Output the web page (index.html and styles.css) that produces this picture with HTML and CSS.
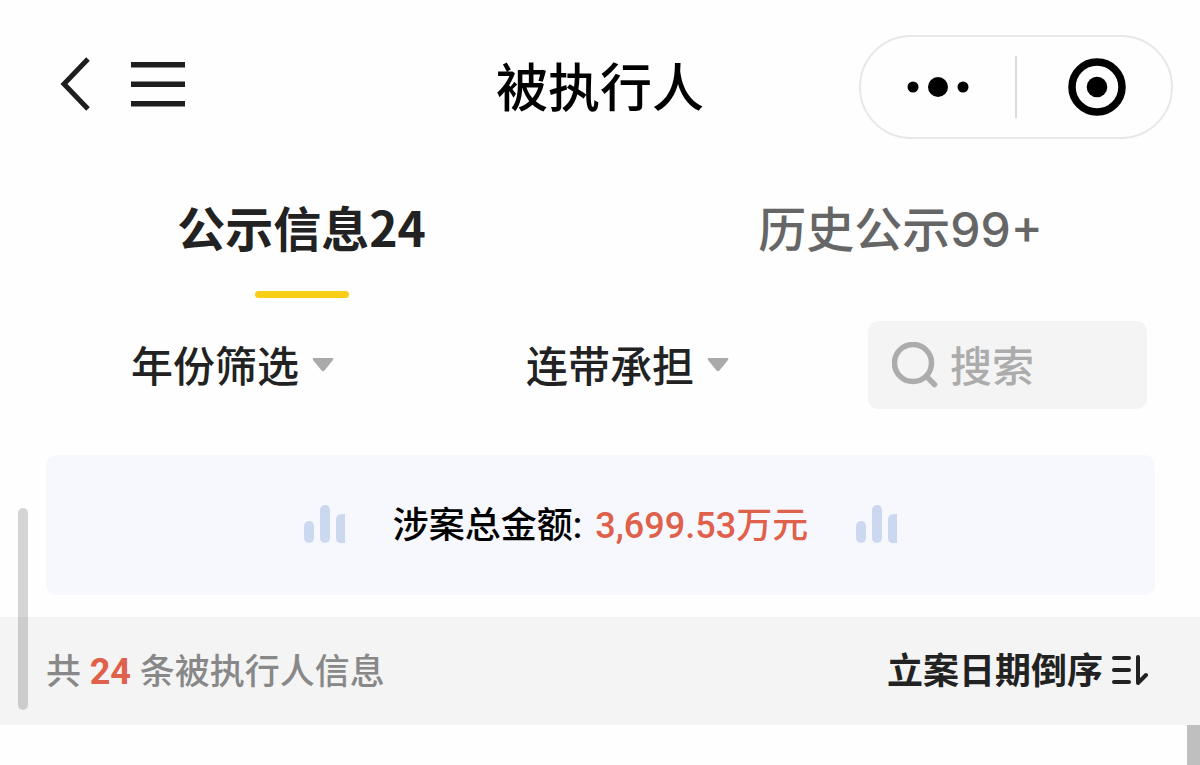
FILE: index.html
```
<!DOCTYPE html>
<html lang="zh-CN">
<head>
  <meta charset="UTF-8" />
  <meta name="viewport" content="width=device-width, initial-scale=1.0"/>
  <title>被执行人</title>
  <link rel="stylesheet" href="styles.css">
</head>
<body>
  <header class="header">
    <div class="nav">
      <button class="icon-btn" aria-label="返回">
        <svg width="32" height="56" viewBox="0 0 32 56" fill="none" stroke="#1e1e1e" stroke-width="5"><path d="M29 3 5 28 29 53"/></svg>
      </button>
      <button class="icon-btn" aria-label="菜单">
        <svg width="54" height="56" viewBox="0 0 54 56" fill="#1e1e1e"><path d="M0 6h54v5.500H0zM0 25.500h54V31H0zM0 45h54v5.500H0z"/></svg>
      </button>
    </div>
    <h1 class="title">被执行人</h1>
    <div class="capsule">
      <button class="icon-btn capsule-btn" aria-label="更多">
        <svg width="62" height="22" viewBox="0 0 62 22"><circle cx="6" cy="11" r="5.500"/><circle cx="31" cy="11" r="10"/><circle cx="56" cy="11" r="5.500"/></svg>
      </button>
      <span class="capsule-line"></span>
      <button class="icon-btn capsule-btn close" aria-label="关闭">
        <svg width="58" height="58" viewBox="0 0 58 58"><circle cx="29" cy="29" r="25" fill="none" stroke="#000" stroke-width="7.500"/><circle cx="29" cy="29" r="10.300"/></svg>
      </button>
    </div>
  </header>

  <nav class="tabs">
    <a href="#current" class="tab active">公示信息24</a>
    <a href="#history" class="tab">历史公示99+</a>
  </nav>

  <form class="filters">
    <div class="filter">
      <select aria-label="年份筛选"><option>年份筛选</option></select>
      <svg class="caret" width="22" height="14" viewBox="0 0 22 14"><path d="M2 0h18q2 0 1 2L12.500 12.500q-1.500 1.500-3 0L1 2Q0 0 2 0z"/></svg>
    </div>
    <div class="filter">
      <select aria-label="连带承担"><option>连带承担</option></select>
      <svg class="caret" width="22" height="14" viewBox="0 0 22 14"><path d="M2 0h18q2 0 1 2L12.500 12.500q-1.500 1.500-3 0L1 2Q0 0 2 0z"/></svg>
    </div>
    <label class="search">
      <svg width="46" height="46" viewBox="0 0 46 46" fill="none" stroke="#acacac" stroke-width="5.500" stroke-linecap="round"><circle cx="21" cy="21" r="18.500"/><path d="m35 35 7.500 7.500"/></svg>
      <input type="search" placeholder="搜索" aria-label="搜索">
    </label>
  </form>

  <!-- Total amount -->
  <section class="total">
    <svg width="41" height="38" viewBox="0 0 41 38" fill="#cbd8ef"><rect y="16" width="10" height="22" rx="5"/><rect x="16" width="10" height="38" rx="5"/><path d="M32 15q0-6 6-6h3v29h-4q-5 0-5-5z"/></svg>
    <p>涉案总金额: <strong>3,699.53万元</strong></p>
    <svg width="41" height="38" viewBox="0 0 41 38" fill="#cbd8ef"><rect y="16" width="10" height="22" rx="5"/><rect x="16" width="10" height="38" rx="5"/><path d="M32 15q0-6 6-6h3v29h-4q-5 0-5-5z"/></svg>
  </section>

  <div class="list-bar">
    <p>共 <strong>24</strong> 条被执行人信息</p>
    <button class="sort">
      <span>立案日期倒序</span>
      <svg width="37" height="32" viewBox="0 0 37 32" fill="none" stroke="#222" stroke-width="4" stroke-linecap="round" stroke-linejoin="round"><path d="M3 4h15M3 16h15M3 28h15M27 3v26l8-8"/></svg>
    </button>
  </div>

  <main class="list">
    <div class="list-edge"></div>
  </main>

  <div class="scroll-thumb"></div>
</body>
</html>
```
FILE: styles.css
```
* {
  box-sizing: border-box;
}
body {
  margin: 0;
  min-height: 100vh;
  display: flex;
  flex-direction: column;
  position: relative;
  background: #fefefe;
  color: #222;
  font-family: Roboto, "Noto Sans CJK SC", sans-serif;
  font-weight: 500;
}
button, select, input {
  font: inherit;
  color: inherit;
  border: none;
  background: none;
  padding: 0;
  margin: 0;
}
button {
  cursor: pointer;
}
svg {
  display: block;
  flex-shrink: 0;
}
p {
  margin: 0;
}

.header {
  display: grid;
  grid-template-columns: 1fr auto 1fr;
  align-items: center;
  padding: 35px 27px 0;
}
.nav {
  display: flex;
  gap: 40px;
  padding-left: 32px;
  padding-bottom: 6px;
}
.title {
  margin: 0;
  padding-top: 6px;
  font-size: 52px;
  line-height: 76px;
  font-weight: 500;
  color: #000;
}
.capsule {
  justify-self: end;
  display: flex;
  align-items: center;
  width: 314px;
  height: 104px;
  border: 2px solid #e8e8e8;
  border-radius: 52px;
}
.capsule-btn {
  flex: 1;
  display: flex;
  justify-content: center;
}
.capsule-btn.close svg {
  margin-left: 6px;
}
.capsule-line {
  width: 2px;
  height: 62px;
  background: #dcdcdc;
}

.tabs {
  display: grid;
  grid-template-columns: 1fr 1fr;
  padding: 56px 0 0 2px;
}
.tab {
  display: flex;
  flex-direction: column;
  align-items: center;
  font-size: 48px;
  line-height: 70px;
  color: #666;
  text-decoration: none;
}
.tab:not(.active) {
  font-family: Inter, "Noto Sans CJK SC", sans-serif;
}
.tab.active {
  gap: 34px;
  font-family: "Noto Sans CJK SC", sans-serif;
  line-height: 62px;
  color: #222;
  font-weight: 700;
}
.tab.active::after {
  content: "";
  width: 94px;
  height: 7px;
  border-radius: 4px;
  background: #f8ce16;
}

.filters {
  display: flex;
  align-items: center;
  margin: 23px 53px 0 35px;
}
.filter {
  flex: 1;
  display: flex;
  align-items: center;
  justify-content: center;
  gap: 12px;
  font-size: 42px;
}
.filter select {
  appearance: none;
  padding-top: 6px;
  line-height: 60px;
}
.caret {
  fill: #aaa;
}
.search {
  display: flex;
  align-items: center;
  gap: 12px;
  width: 279px;
  height: 88px;
  margin-left: 43px;
  padding: 0 24px;
  border-radius: 10px;
  background: #f4f4f4;
}
.search input {
  flex: 1;
  min-width: 0;
  padding-top: 6px;
  font-size: 42px;
  line-height: 60px;
  outline: none;
}
.search input::placeholder {
  color: #acacac;
}

.total {
  display: flex;
  align-items: center;
  justify-content: center;
  gap: 48px;
  height: 140px;
  margin: 46px 45px 22px 46px;
  padding-bottom: 2px;
  border-radius: 10px;
  background: #f7f8fe;
  color: #000;
  font-size: 36px;
}
.total p,
.list-bar p,
.sort span {
  padding-bottom: 4px;
}
.total strong,
.list-bar strong {
  font-weight: 500;
  color: #df604b;
}
.total strong {
  margin-left: 4px;
}

.list-bar {
  display: flex;
  align-items: center;
  justify-content: space-between;
  height: 108px;
  padding: 0 52px 2px 46px;
  background: #f4f4f4;
}
.list-bar p {
  color: #888;
  font-size: 35px;
}
.list-bar strong {
  font-size: 36px;
  font-weight: 700;
}
.sort {
  display: flex;
  align-items: center;
  gap: 8px;
  font-size: 36px;
  font-weight: 700;
}

.list {
  flex: 1;
  display: flex;
  justify-content: flex-end;
}
.list-edge {
  width: 13px;
  background: #bfbfbf;
}

/* floats over the card edge and the list bar */
.scroll-thumb {
  position: absolute;
  left: 18px;
  bottom: 55px;
  width: 10px;
  height: 202px;
  border-radius: 5px;
  background: rgba(0, 0, 0, 0.16);
}
```
